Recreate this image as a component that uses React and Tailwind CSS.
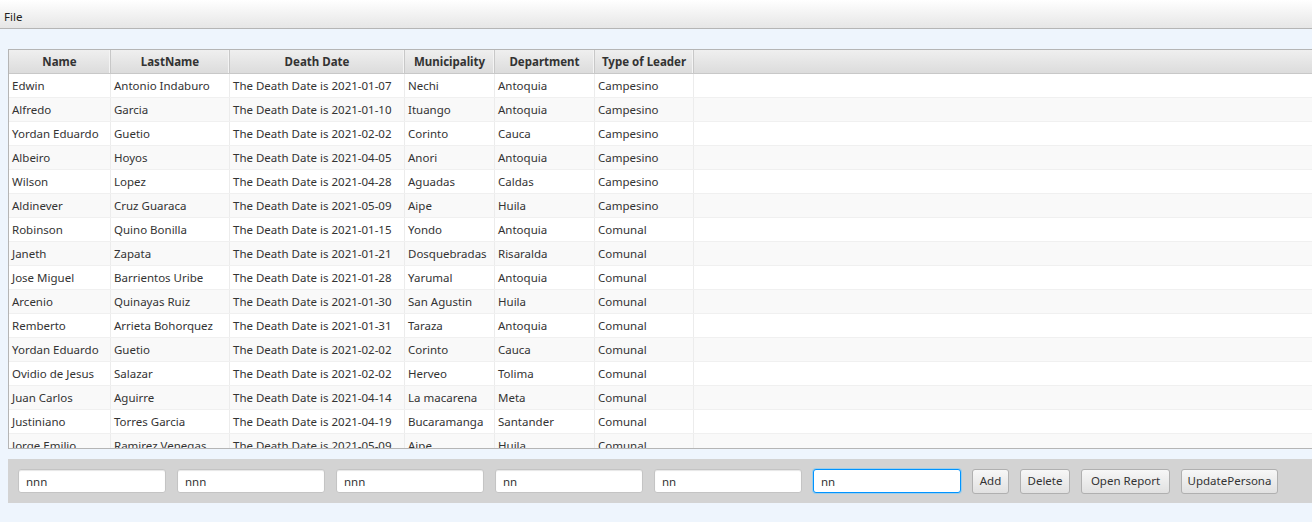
import React from 'react';

const columns = [
    { title: 'Name', width: 'w-[102px]' },
    { title: 'LastName', width: 'w-[119px]' },
    { title: 'Death Date', width: 'w-[175px]' },
    { title: 'Municipality', width: 'w-[90px]' },
    { title: 'Department', width: 'w-[100px]' },
    { title: 'Type of Leader', width: 'w-[99px]' },
];

const leaders = [
    ['Edwin', 'Antonio Indaburo', '2021-01-07', 'Nechi', 'Antoquia', 'Campesino'],
    ['Alfredo', 'Garcia', '2021-01-10', 'Ituango', 'Antoquia', 'Campesino'],
    ['Yordan Eduardo', 'Guetio', '2021-02-02', 'Corinto', 'Cauca', 'Campesino'],
    ['Albeiro', 'Hoyos', '2021-04-05', 'Anori', 'Antoquia', 'Campesino'],
    ['Wilson', 'Lopez', '2021-04-28', 'Aguadas', 'Caldas', 'Campesino'],
    ['Aldinever', 'Cruz Guaraca', '2021-05-09', 'Aipe', 'Huila', 'Campesino'],
    ['Robinson', 'Quino Bonilla', '2021-01-15', 'Yondo', 'Antoquia', 'Comunal'],
    ['Janeth', 'Zapata', '2021-01-21', 'Dosquebradas', 'Risaralda', 'Comunal'],
    ['Jose Miguel', 'Barrientos Uribe', '2021-01-28', 'Yarumal', 'Antoquia', 'Comunal'],
    ['Arcenio', 'Quinayas Ruiz', '2021-01-30', 'San Agustin', 'Huila', 'Comunal'],
    ['Remberto', 'Arrieta Bohorquez', '2021-01-31', 'Taraza', 'Antoquia', 'Comunal'],
    ['Yordan Eduardo', 'Guetio', '2021-02-02', 'Corinto', 'Cauca', 'Comunal'],
    ['Ovidio de Jesus', 'Salazar', '2021-02-02', 'Herveo', 'Tolima', 'Comunal'],
    ['Juan Carlos', 'Aguirre', '2021-04-14', 'La macarena', 'Meta', 'Comunal'],
    ['Justiniano', 'Torres Garcia', '2021-04-19', 'Bucaramanga', 'Santander', 'Comunal'],
    ['Jorge Emilio', 'Ramirez Venegas', '2021-05-09', 'Aipe', 'Huila', 'Comunal'],
];

const fields = ['nnn', 'nnn', 'nnn', 'nn', 'nn', 'nn'];
const buttons = [
    { label: 'Add', width: 'w-[37px]' },
    { label: 'Delete', width: 'w-[50px]' },
    { label: 'Open Report', width: 'w-[89px]' },
    { label: 'UpdatePersona', width: 'w-[97px]' },
];

const App = () => {
    return (
        <div className="w-[1312px] h-[522px] bg-[#eef5fd] overflow-hidden text-[11.5px] text-[#333] font-['Noto_Sans',sans-serif]">
            {/* Menu bar */}
            <div className="h-[29px] bg-gradient-to-b from-white to-[#e6e6e6] border-b border-[#b5b5b5] flex items-center px-[4px]">
                <span className="text-[#222] mt-[5px]">File</span>
            </div>

            {/* Table */}
            <div className="pl-[8px] pt-[20px]">
                <div className="h-[400px] w-[1320px] border border-[#b5b5b5] bg-white overflow-hidden">
                    <div className="flex h-[24px] bg-gradient-to-b from-[#efefef] to-[#dcdcdc] border-b border-[#c8c8c8]">
                        {columns.map((c) => (
                            <div
                                key={c.title}
                                className={`${c.width} shrink-0 flex items-center justify-center pt-[1px] font-bold text-[#333] border-r border-[#c8c8c8] shadow-[inset_-1px_0_0_#f4f4f4]`}
                            >
                                {c.title}
                            </div>
                        ))}
                        <div className="flex-1" />
                    </div>
                    {leaders.map((row, i) => (
                        <div
                            key={i}
                            className={`flex h-[24px] border-b border-[#f0f0f0] ${i % 2 === 1 ? 'bg-[#f9f9f9]' : 'bg-white'}`}
                        >
                            {row.map((cell, j) => (
                                <div
                                    key={j}
                                    className={`${columns[j].width} shrink-0 flex items-center px-[3px] pt-[1px] border-r border-[#ececec] whitespace-nowrap overflow-hidden`}
                                >
                                    {j === 2 ? `The Death Date is ${cell}` : cell}
                                </div>
                            ))}
                            <div className="flex-1" />
                        </div>
                    ))}
                </div>
            </div>

            {/* Form bar */}
            <div className="ml-[8px] mt-[10px] h-[44px] bg-[#d3d3d3] flex items-center pl-[10px] gap-[11px]">
                {fields.map((v, i) => (
                    <input
                        key={i}
                        readOnly
                        value={v}
                        className={`w-[148px] h-[24px] shrink-0 bg-white rounded-[3px] px-[7px] text-[11.5px] text-[#333] outline-none ${
                            i === 5
                                ? 'border border-[#0093ff] shadow-[0_0_0_1px_#9ecde8]'
                                : 'border border-[#c4c4c4] shadow-[inset_0_1px_1px_#e6e6e6]'
                        }`}
                    />
                ))}
                {buttons.map((b) => (
                    <button
                        key={b.label}
                        className={`${b.width} h-[25px] shrink-0 rounded-[3px] border border-[#b0b0b0] bg-gradient-to-b from-[#f7f7f7] to-[#e1e1e1] text-[#333] text-[11.5px] whitespace-nowrap`}
                    >
                        {b.label}
                    </button>
                ))}
            </div>
        </div>
    );
};

export default App;
